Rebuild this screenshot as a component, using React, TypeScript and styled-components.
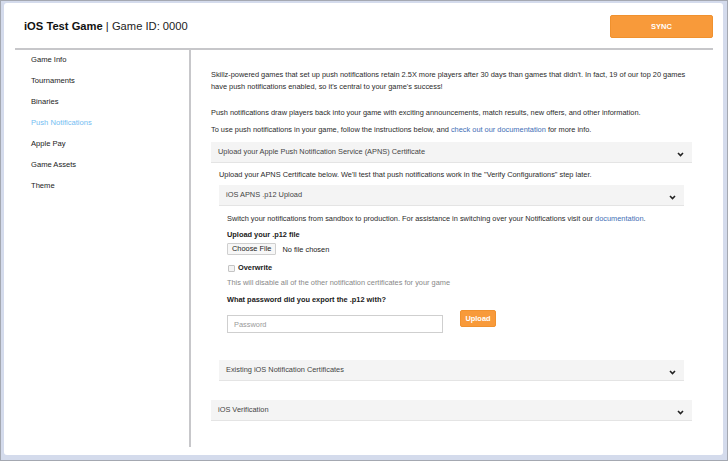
import React from 'react';
import styled, { createGlobalStyle } from 'styled-components';

const menuItems = ['Game Info', 'Tournaments', 'Binaries', 'Push Notifications', 'Apple Pay', 'Game Assets', 'Theme'];
const activeItem = 'Push Notifications';

const GlobalStyle = createGlobalStyle`
  html, body {
    margin: 0;
    padding: 0;
  }
  body {
    font-family: 'Liberation Sans', Arial, Helvetica, sans-serif;
    color: #333;
  }
`;

function Chevron() {
  return (
    <svg width="7" height="5" viewBox="0 0 7 5">
      <polyline points="1,1 3.5,3.5 6,1" fill="none" stroke="#222" strokeWidth="1.6" />
    </svg>
  );
}

function App() {
  return (
    <Frame>
      <GlobalStyle />
      <Window>
        <Header>
          <Title>
            <strong>iOS Test Game</strong> | Game ID: 0000
          </Title>
          <SyncButton>SYNC</SyncButton>
        </Header>
        <Body>
          <Sidebar>
            {menuItems.map((item) => (
              <MenuItem key={item} $active={item === activeItem}>
                {item}
              </MenuItem>
            ))}
          </Sidebar>
          <Content>
            <Text>
              Skillz-powered games that set up push notifications retain 2.5X more players after 30 days than games that didn't. In fact, 19 of our top 20 games
              <br />
              have push notifications enabled, so it's central to your game's success!
            </Text>
            <Text $mt={14}>
              Push notifications draw players back into your game with exciting announcements, match results, new offers, and other information.
            </Text>
            <Text $mt={5}>
              To use push notifications in your game, follow the instructions below, and <Link>check out our documentation</Link> for more info.
            </Text>

            <Panel $mt={6}>
              <PanelHeader>
                <span>Upload your Apple Push Notification Service (APNS) Certificate</span>
                <Chevron />
              </PanelHeader>
              <PanelBody>
                <Text $mt={6}>
                  Upload your APNS Certificate below. We'll test that push notifications work in the "Verify Configurations" step later.
                </Text>
                <Panel $mt={4}>
                  <PanelHeader>
                    <span>iOS APNS .p12 Upload</span>
                    <Chevron />
                  </PanelHeader>
                  <PanelBody>
                    <Text $mt={7}>
                      Switch your notifications from sandbox to production. For assistance in switching over your Notifications visit our <Link>documentation</Link>.
                    </Text>
                    <Label $mt={4}>Upload your .p12 file</Label>
                    <FileRow>
                      <FileButton>Choose File</FileButton>
                      <span>No file chosen</span>
                    </FileRow>
                    <CheckRow>
                      <CheckBox />
                      <Label>Overwrite</Label>
                    </CheckRow>
                    <Hint>This will disable all of the other notification certificates for your game</Hint>
                    <Label $mt={5}>What password did you export the .p12 with?</Label>
                    <PasswordRow>
                      <PasswordInput type="password" placeholder="Password" />
                      <UploadButton>Upload</UploadButton>
                    </PasswordRow>
                  </PanelBody>
                </Panel>
                <Panel $mt={27}>
                  <PanelHeader>
                    <span>Existing iOS Notification Certificates</span>
                    <Chevron />
                  </PanelHeader>
                </Panel>
              </PanelBody>
            </Panel>

            <Panel $mt={19}>
              <PanelHeader>
                <span>iOS Verification</span>
                <Chevron />
              </PanelHeader>
            </Panel>
          </Content>
        </Body>
      </Window>
    </Frame>
  );
}

const Frame = styled.div`
  box-sizing: border-box;
  width: 728px;
  height: 461px;
  border: 1px solid #a4a8b1;
  background: #d4dbec;
  padding: 2px 4px 5px 3px;
`;

const Window = styled.div`
  height: 100%;
  background: #fff;
  border-radius: 3px;
  display: flex;
  flex-direction: column;
`;

const Header = styled.header`
  height: 45px;
  display: flex;
  align-items: center;
  justify-content: space-between;
  padding: 0 10px 0 20px;
  flex-shrink: 0;
`;

const Title = styled.h1`
  margin: 0;
  font-size: 11.2px;
  font-weight: normal;
  color: #222;

  strong {
    font-weight: bold;
    color: #111;
  }
`;

const SyncButton = styled.button`
  width: 103px;
  height: 23px;
  margin-top: 1px;
  border: 1px solid #f0912e;
  border-radius: 2px;
  background: #f89a3a;
  color: #fff;
  font-family: inherit;
  font-size: 7.5px;
  font-weight: bold;
`;

const Body = styled.div`
  display: flex;
  height: 397px;
  margin: 0 10px 0 11px;
  border-top: 2px solid #c7c7ca;
`;

const Sidebar = styled.nav`
  width: 176px;
  flex-shrink: 0;
  border-right: 2px solid #c7c7ca;
  padding: 4px 0 0 16px;
  box-sizing: border-box;
`;

const MenuItem = styled.div<{ $active?: boolean }>`
  height: 21px;
  line-height: 12px;
  font-size: 7.6px;
  color: ${(p) => (p.$active ? '#74bdf2' : '#1a1a1a')};
`;

const Content = styled.main`
  flex: 1;
  min-width: 0;
  padding: 19px 21px 0 20px;
`;

const Text = styled.p<{ $mt?: number }>`
  margin: ${(p) => p.$mt ?? 0}px 0 0;
  font-size: 7.4px;
  line-height: 12px;
  color: #2a2a2a;
`;

const Link = styled.a`
  color: #3e6eb5;
`;

const Panel = styled.section<{ $mt?: number }>`
  margin-top: ${(p) => p.$mt ?? 0}px;
`;

const PanelHeader = styled.div`
  height: 20px;
  display: flex;
  align-items: center;
  justify-content: space-between;
  padding: 0 8px 0 7px;
  background: #f4f4f4;
  border-bottom: 1px solid #e4e4e4;
  font-size: 7.4px;
  color: #444;

  span {
    margin-top: -2px;
  }

  svg {
    margin-top: 5px;
  }
`;

const PanelBody = styled.div`
  padding: 0 8px 0 8px;
`;

const Label = styled.div<{ $mt?: number }>`
  margin-top: ${(p) => p.$mt ?? 0}px;
  font-size: 7.4px;
  line-height: 12px;
  font-weight: bold;
  color: #1a1a1a;
`;

const FileRow = styled.div`
  margin-top: 2px;
  display: flex;
  align-items: center;
  gap: 6px;
  height: 12px;
  font-size: 7.4px;
  color: #222;
`;

const FileButton = styled.button`
  height: 12px;
  padding: 0 4px;
  border: 1px solid #cfcfcf;
  border-radius: 1px;
  background: #f7f7f7;
  font-family: inherit;
  font-size: 7.4px;
  color: #222;
  line-height: 10px;
`;

const CheckRow = styled.div`
  margin-top: 7px;
  display: flex;
  align-items: center;
  gap: 3px;
`;

const CheckBox = styled.span`
  width: 5px;
  height: 5px;
  margin-left: 1px;
  border: 1px solid #c4c4c4;
  border-radius: 1px;
  background: #f4f4f4;
`;

const Hint = styled.div`
  margin-top: 3px;
  font-size: 7.4px;
  line-height: 12px;
  color: #888;
`;

const PasswordRow = styled.div`
  margin-top: 4px;
  display: flex;
  align-items: flex-start;
  gap: 17px;
`;

const PasswordInput = styled.input`
  box-sizing: border-box;
  width: 216px;
  height: 18px;
  margin-top: 5px;
  padding: 0 6px;
  border: 1px solid #cfcfcf;
  font-family: inherit;
  font-size: 7.4px;
  color: #333;

  &::placeholder {
    color: #999;
  }
`;

const UploadButton = styled.button`
  width: 36px;
  height: 17px;
  padding: 0;
  border: 1px solid #f0912e;
  border-radius: 2px;
  background: #f89a3a;
  color: #fff;
  font-family: inherit;
  font-size: 7.4px;
  font-weight: bold;
`;

export default App;
